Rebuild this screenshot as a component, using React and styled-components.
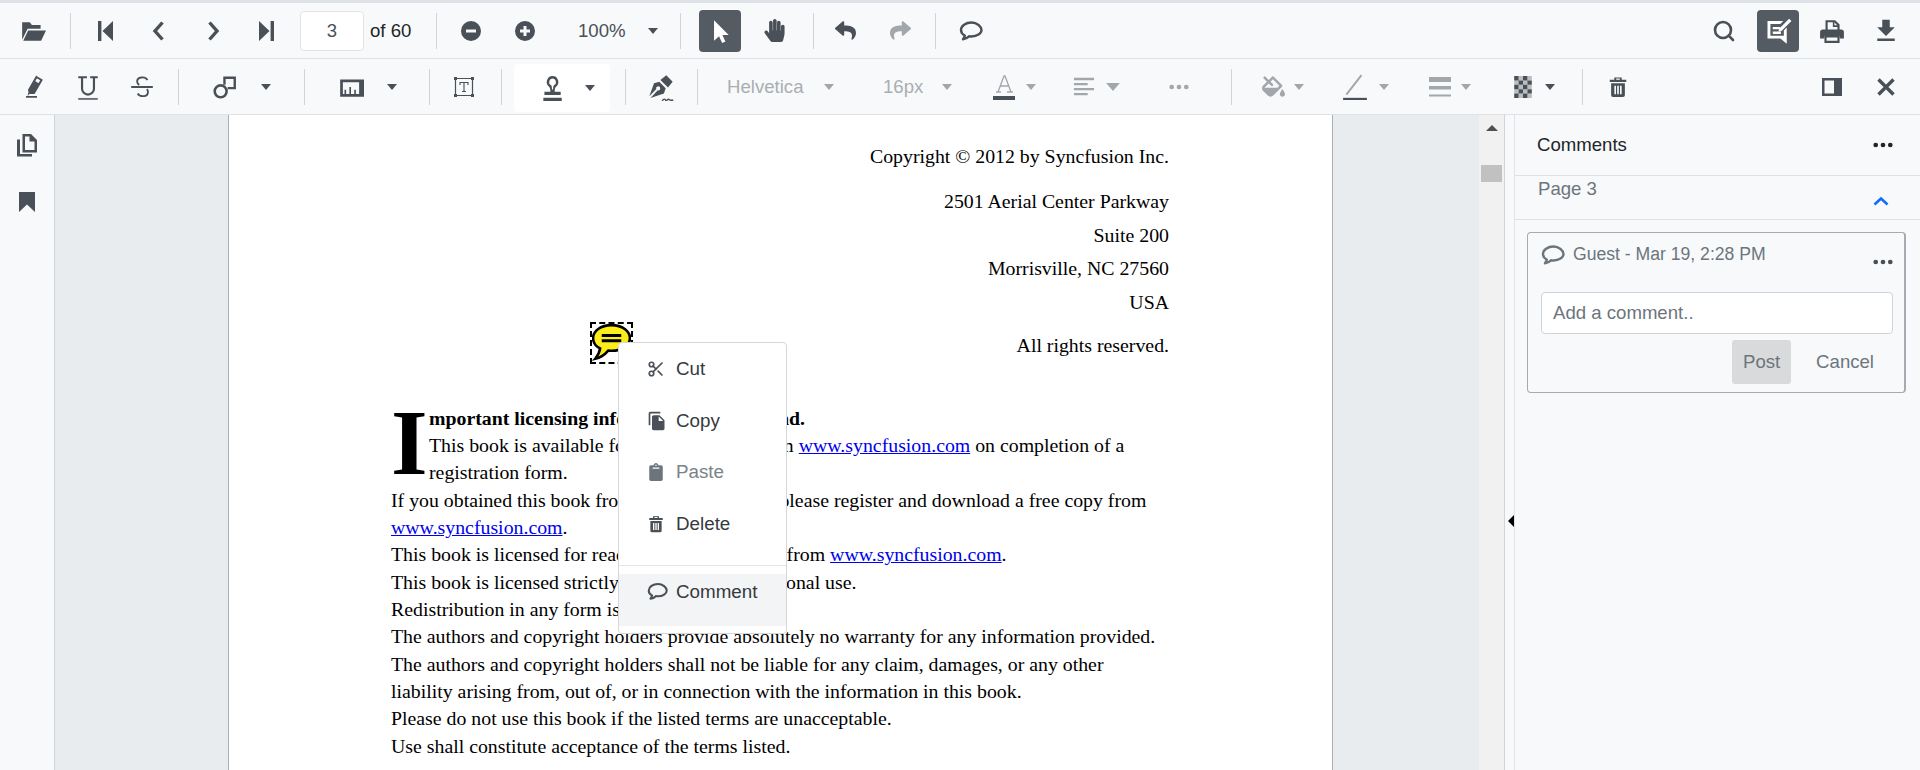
import React from 'react';
import styled, { createGlobalStyle } from 'styled-components';
import { FaHandPaper, FaReply, FaShare, FaFillDrip, FaClipboard } from 'react-icons/fa';
import { MdFileDownload, MdFileCopy } from 'react-icons/md';
import { Search, Scissors } from 'lucide-react';

const GlobalStyle = createGlobalStyle`
    html, body {
        margin: 0;
        height: 100%;
        overflow: hidden;
        background: #fff;
        font-family: "Liberation Sans", Arial, sans-serif;
    }
    #root { height: 100%; }
    * { box-sizing: border-box; }
`

const Viewer = styled.div`
    height: 770px;
    width: 1920px;
    display: flex;
    flex-direction: column;
    border-top: 3px solid #dee2e6;
    overflow: hidden;
`

const Bar = styled.div`
    height: 56px;
    flex-shrink: 0;
    display: flex;
    align-items: center;
    padding: 0 7px 0 ${p => p.$pl}px;
    background: #f8f9fa;
    border-bottom: 1px solid #dee2e6;
    color: #495057;
`

const Tool = styled.div`
    width: ${p => p.$w || 54}px;
    margin-left: ${p => p.$ml || 0}px;
    height: 42px;
    flex-shrink: 0;
    display: flex;
    align-items: center;
    justify-content: center;
    color: ${p => p.$off ? '#a2a7ac' : '#495057'};
`

const ActiveTool = styled(Tool)`
    width: 42px;
    background: #545b62;
    border-radius: 4px;
    color: #fff;
`

const Sep = styled.div`
    width: 1px;
    height: ${p => p.$h || 36}px;
    flex-shrink: 0;
    margin-left: ${p => p.$ml || 0}px;
    background: #ced4da;
`

const PageInput = styled.div`
    width: 64px;
    height: 40px;
    margin-left: 6px;
    flex-shrink: 0;
    background: #fff;
    border: 1px solid #e2e5e8;
    border-radius: 4px;
    display: flex;
    align-items: center;
    justify-content: center;
    font-size: 18.5px;
    color: #495057;
`

const BarText = styled.div`
    margin-left: ${p => p.$ml || 0}px;
    width: ${p => p.$w}px;
    flex-shrink: 0;
    white-space: nowrap;
    font-size: 18.6px;
    color: ${p => p.$color};
`

const Spacer = styled.div`
    flex: 1;
`

const StampBox = styled.div`
    width: 96px;
    height: 48px;
    margin-left: 12px;
    margin-top: 2px;
    flex-shrink: 0;
    display: flex;
    align-items: center;
    padding-left: 11px;
    background: #fff;
    border-radius: 4px;
`

const Main = styled.div`
    flex: 1;
    min-height: 0;
    display: flex;
`

const Rail = styled.div`
    width: 55px;
    flex-shrink: 0;
    background: #f8f9fa;
    border-right: 1px solid #ced4da;
    display: flex;
    flex-direction: column;
    align-items: center;
    padding-top: 18px;
    gap: 33px;
    color: #495057;
`

const Canvas = styled.div`
    width: 1424px;
    flex-shrink: 0;
    background: #e9ecef;
    padding-left: 173px;
    overflow: hidden;
`

const Page = styled.div`
    position: relative;
    width: 1105px;
    height: 100%;
    background: #fff;
    border-left: 1px solid #a9afb5;
    border-right: 1px solid #a9afb5;
    padding: 20px 163px 0 162px;
    font-family: "Liberation Serif", "Times New Roman", serif;
    font-size: 19.82px;
    color: #000;
`

const RightLine = styled.div`
    text-align: right;
    height: ${p => p.$h}px;
    line-height: ${p => p.$h}px;
    margin-top: ${p => p.$mt || 0}px;
`

const Body = styled.div`
    margin-top: 42px;
    line-height: 27.35px;
`

const DropCap = styled.span`
    float: left;
    font-size: 94px;
    font-weight: bold;
    line-height: 74px;
    height: 76px;
    width: 38px;
`

const Link = styled.a`
    color: #0000ee;
    text-decoration: underline;
`

const NoteMark = styled.div`
    position: absolute;
    left: 361px;
    top: 207px;
    width: 43px;
    height: 42px;
    border: 2px dashed #000;
    display: flex;
    align-items: center;
    justify-content: center;
`

const Menu = styled.div`
    position: absolute;
    left: 389px;
    top: 227px;
    width: 169px;
    height: 292px;
    background: #fff;
    border: 1px solid #d5d8db;
    border-radius: 4px;
    font-family: "Liberation Sans", Arial, sans-serif;
    font-size: 18.8px;
    color: #343a40;
`

const MenuItem = styled.div`
    height: ${p => p.$h || 51.7}px;
    display: flex;
    align-items: center;
    color: ${p => p.$off ? '#7a828a' : '#343a40'};
    background: ${p => p.$hot ? '#f3f4f5' : 'transparent'};
    padding-bottom: ${p => p.$hot ? 16 : 0}px;

    svg {
        color: ${p => p.$off ? '#6c757d' : '#495057'};
    }
`

const MenuIcon = styled.div`
    width: 57px;
    padding-left: 28px;
    flex-shrink: 0;
    display: flex;
    align-items: center;
`

const MenuLine = styled.div`
    height: 1px;
    background: #e2e4e6;
    margin-top: 15px;
    margin-bottom: 8px;
`

const Track = styled.div`
    width: 26px;
    flex-shrink: 0;
    background: #f1f1f1;
    border-right: 1px solid #ced4da;
    display: flex;
    flex-direction: column;
    align-items: center;
    padding-top: 10px;
`

const TrackArrow = styled.div`
    width: 0;
    height: 0;
    border-left: 6px solid transparent;
    border-right: 6px solid transparent;
    border-bottom: 6px solid #505050;
`

const Thumb = styled.div`
    width: 21px;
    height: 17px;
    margin-top: 34px;
    background: #c1c1c1;
`

const Splitter = styled.div`
    width: 10px;
    flex-shrink: 0;
    background: #f8f9fa;
    border-right: 1px solid #e1e4e7;
    position: relative;
`

const SplitArrow = styled.div`
    position: absolute;
    left: 3px;
    top: 400px;
    width: 0;
    height: 0;
    border-top: 6px solid transparent;
    border-bottom: 6px solid transparent;
    border-right: 6px solid #000;
`

const Panel = styled.div`
    flex: 1;
    min-width: 0;
    background: #f8f9fa;
    color: #343a40;
    font-size: 18.6px;
`

const PanelHead = styled.div`
    height: 61px;
    display: flex;
    align-items: center;
    justify-content: space-between;
    padding: 0 27px 0 22px;
    border-bottom: 1px solid #dee2e6;
    color: #212529;
`

const PageRow = styled.div`
    height: 44px;
    position: relative;
    padding: 2px 0 0 23px;
    border-bottom: 1px solid #dee2e6;
    color: #6c757d;
    line-height: 22px;
`

const Chevron = styled.div`
    position: absolute;
    right: 31px;
    top: 20px;
    color: #0d6efd;
    display: flex;
`

const Card = styled.div`
    width: 379px;
    height: 161px;
    margin: 12px 0 0 12px;
    border: 1px solid #a5abb1;
    border-right-width: 2px;
    border-radius: 4px;
    padding: 0 11px 0 13px;
    color: #6c757d;
`

const CardHead = styled.div`
    height: 59px;
    display: flex;
    align-items: flex-start;
    padding-top: 10px;
    line-height: 22px;

    svg { flex-shrink: 0; }
`

const CardTitle = styled.div`
    flex: 1;
    margin-left: 8px;
    font-size: 17.6px;
`

const CardDots = styled.div`
    display: flex;
    margin-top: 16px;
    color: #495057;
`

const CommentInput = styled.div`
    height: 42px;
    background: #fff;
    border: 1px solid #ced4da;
    border-radius: 4px;
    padding-left: 11px;
    display: flex;
    align-items: center;
    color: #6c757d;
`

const CardActions = styled.div`
    display: flex;
    justify-content: flex-end;
    align-items: center;
    margin-top: 6px;
    padding-right: 19px;
`

const PostButton = styled.div`
    width: 59px;
    height: 44px;
    background: #d9dadc;
    border-radius: 3px;
    display: flex;
    align-items: center;
    justify-content: center;
`

const CancelButton = styled.div`
    margin-left: 25px;
`

const Svg = ({ size = 24, w, h, children, vb = '0 0 24 24' }) => (
    <svg width={w || size} height={h || size} viewBox={vb} fill="currentColor" aria-hidden="true">
        {children}
    </svg>
);

const Stroke = { fill: 'none', stroke: 'currentColor', strokeWidth: 2.4 };

const Caret = ({ w = 10 }) => (
    <Svg w={w} h={w / 2 + 1} vb="0 0 12 7"><path d="M0 0h12L6 7z" /></Svg>
);

const Dots = () => (
    <Svg w={20} h={6} vb="0 0 22 6">
        <circle cx="3" cy="3" r="2.6" /><circle cx="11" cy="3" r="2.6" /><circle cx="19" cy="3" r="2.6" />
    </Svg>
);

const BubbleIcon = ({ size = 24, sw = 2.4 }) => (
    <Svg size={size}>
        <path d="M12.500 3.500C6.800 3.500 2 6.800 2 11c0 2.400 1.500 4.300 3.800 5.500-.2 1.400-.8 2.500-1.800 3.800 2.500-.4 4.500-1.500 6-3 .8.100 1.600.200 2.500.200 5.500 0 10-3 10-6.500s-4.500-7.500-10-7.500z" {...Stroke} strokeWidth={sw} strokeLinejoin="round" />
    </Svg>
);

const FolderIcon = () => (
    <Svg size={26}><path d="M2 4h7l2 2.500h8V10H7L2 20z" /><path d="M7.500 11.500H24L19.500 21H3z" /></Svg>
);
const FirstIcon = () => (
    <Svg size={24}><path d="M5 2h3.400v20H5zM20 2v20L9.500 12z" /></Svg>
);
const LastIcon = () => (
    <Svg size={24}><path d="M19 2h-3.400v20H19zM4 2v20l10.500-10z" /></Svg>
);
const ChevLeft = () => (
    <Svg size={24}><path d="M15.500 3.500 8 12l7.500 8.500" {...Stroke} strokeWidth={3.400} /></Svg>
);
const ChevRight = () => (
    <Svg size={24}><path d="M8.500 3.500 16 12l-7.500 8.500" {...Stroke} strokeWidth={3.400} /></Svg>
);
const MinusIcon = () => (
    <Svg size={24}><path fillRule="evenodd" d="M12 2a10 10 0 1 0 0 20 10 10 0 0 0 0-20zM7 10.500h10v3H7z" /></Svg>
);
const PlusIcon = () => (
    <Svg size={24}><path fillRule="evenodd" d="M12 2a10 10 0 1 0 0 20 10 10 0 0 0 0-20zM10.500 7h3v3.500H17v3h-3.500V17h-3v-3.500H7v-3h3.500z" /></Svg>
);
const CursorIcon = () => (
    <Svg size={26}><path d="M6.500 2v19l4.600-4.200 2.900 6.200 3-1.400-2.800-6h5.800z" /></Svg>
);
const NoteEditIcon = () => (
    <Svg size={28}>
        <path fillRule="evenodd" d="M3 3.500h13.500L14 6H5.500v10H17v-4.500l2.500-2.500V23l-5.500-4.500H3z" />
        <path d="M7.500 8.500h6.500v2H7.500zM7.500 12.500h7v2h-7z" />
        <path d="M21.500 1.500l2 2-8.500 8.500-2.600.6.600-2.600z" />
    </Svg>
);
const PrintIcon = () => (
    <Svg size={26}>
        <path d="M7 11V3h7.500L18 6.500V11" {...Stroke} strokeWidth={2} />
        <path d="M13.500 3v4.500H18" {...Stroke} strokeWidth={1.400} />
        <path fillRule="evenodd" d="M3.500 10.500h17A2.500 2.500 0 0 1 23 13v6h-4v-2.500H5V19H1v-6a2.500 2.500 0 0 1 2.500-2.500z" />
        <path d="M6 17h12v5H6z" {...Stroke} strokeWidth={2} />
    </Svg>
);
const HighlightIcon = () => (
    <Svg size={24}>
        <path d="M14.500 2l5 3-7.500 13H8.500L7 15z" fill="none" stroke="currentColor" strokeWidth="2" />
        <path d="M13 6l4.500 2.800-5.500 9.200H8.500L7 15z" />
        <path d="M4 21h11v1.800H4zM7 15l1.500 3-3 3z" />
    </Svg>
);
const UnderlineIcon = () => (
    <Svg size={26}>
        <path d="M3 3h8M14 3h7M6.500 3v10.500a5.500 5.500 0 0 0 11 0V3" {...Stroke} strokeWidth={2} />
        <path d="M3 23h18" {...Stroke} strokeWidth={1.800} opacity="0.8" />
    </Svg>
);
const StrikeIcon = () => (
    <Svg size={26}>
        <path d="M17 5.500C15 2 7.500 2.500 7.500 7c0 1.600 1 2.600 2 3.200M8 18c2 3.500 9.500 3.500 9.500-1.500 0-1-.4-1.800-1-2.500" {...Stroke} strokeWidth={1.700} />
        <path d="M2 12h20" {...Stroke} strokeWidth={1.800} />
    </Svg>
);
const ShapeIcon = () => (
    <Svg size={26}>
        <circle cx="8" cy="16" r="5.500" {...Stroke} strokeWidth={2.400} />
        <path d="M11.500 10V3.500H21V13h-6.500" {...Stroke} strokeWidth={2.200} />
    </Svg>
);
const MeasureIcon = () => (
    <Svg size={26}>
        <path fillRule="evenodd" d="M2 5h22v16H2zM4.500 7.500v11H6v-4h1.500v4h3v-6.500h1.500v6.500h3v-4h1.500v4h3V7.500z" />
    </Svg>
);
const FreeTextIcon = () => (
    <Svg size={24}>
        <path d="M3.500 3.500h17v17h-17z" fill="none" stroke="currentColor" strokeWidth="1.200" />
        <path d="M2 2h3v3H2zM19 2h3v3h-3zM2 19h3v3H2zM19 19h3v3h-3z" />
        <path d="M8 10V7.500h8V10M12 7.500v9M10 16.500h4" fill="none" stroke="currentColor" strokeWidth="1.100" />
    </Svg>
);
const StampIcon = () => (
    <Svg size={26}>
        <path fillRule="evenodd" d="M12.500 1a5.500 5.500 0 0 0-3 10c.7.700 1 2 1 4.500H5v3h15v-3h-5.500c0-2.500.3-3.800 1-4.500a5.500 5.500 0 0 0-3-10zm0 2.300a3.200 3.200 0 0 1 1.500 6c-.8.800-1 2.200-1 4h-1c0-1.800-.2-3.200-1-4a3.200 3.200 0 0 1 1.500-6z" />
        <path d="M4 21h17v3H4z" />
    </Svg>
);
const SignIcon = () => (
    <Svg size={28}>
        <path fillRule="evenodd" d="M10.500 7.500 16 13l-1.500 4.500L3 21.500l6.200-6.700a1.700 1.700 0 1 0-1.200-1.100L2 20 6 8.700z" />
        <path d="M11.500 6 16.500 2l5.500 5.500-4 5z" />
        <path d="M13 24c1.500-2 2.500-2 3-.6s1.700-1.400 2.700-.8 1.800 1.400 3.800.4" {...Stroke} strokeWidth={1.200} />
    </Svg>
);
const FontColorIcon = () => (
    <Svg w={24} h={28} vb="0 0 24 28">
        <path d="M4 19h5M15 19h6M6 19 12 3h1l6 16M8.300 13h8.500" {...Stroke} strokeWidth={1.300} />
        <path d="M1 23h22v4H1z" fill="#495057" />
    </Svg>
);
const AlignIcon = () => (
    <Svg w={22} h={22}>
        <path d="M1 2h22v2.600H1zM1 7.500h15v2.600H1zM1 13h22v2.600H1zM1 18.500h15v2.600H1z" />
    </Svg>
);
const LineColorIcon = () => (
    <Svg size={26}>
        <path d="M4 19 18 1" {...Stroke} strokeWidth={1.800} />
        <path d="M1 22h22v3.500H1z" fill="#495057" />
    </Svg>
);
const ThicknessIcon = () => (
    <Svg size={24}>
        <path d="M1 2h22v5H1zM1 11h22v3.500H1zM1 19.500h22v2H1z" />
    </Svg>
);
const OpacityIcon = () => (
    <Svg size={22} vb="0 0 20 25">
        <path d="M0 0h5v5H0zM10 0h5v5h-5zM5 5h5v5H5zM15 5h5v5h-5zM0 10h5v5H0zM10 10h5v5h-5zM5 15h5v5H5zM15 15h5v5h-5zM0 20h5v5H0zM10 20h5v5h-5z" />
        <path d="M5 0h5v5H5zM15 0h5v5h-5zM0 5h5v5H0zM10 5h5v5h-5zM5 10h5v5H5zM15 10h5v5h-5zM0 15h5v5H0zM10 15h5v5h-5zM5 20h5v5H5zM15 20h5v5h-5z" opacity="0.35" />
    </Svg>
);
const TrashIcon = ({ size = 22 }) => (
    <Svg size={size}>
        <path fillRule="evenodd" d="M3 4h5V1.500h8V4h5v2.500H3zM10 2.800V4h4V2.800zM4.500 8h15v13a2 2 0 0 1-2 2h-11a2 2 0 0 1-2-2zM8 10.500V20h1.800v-9.500zM11.100 10.500V20h1.800v-9.500zM14.200 10.500V20H16v-9.500z" />
    </Svg>
);
const PanelIcon = () => (
    <Svg size={24}>
        <path fillRule="evenodd" d="M2 3h20v18H2zM4.500 5.500v13H14v-13z" />
    </Svg>
);
const CloseIcon = () => (
    <Svg size={24}><path d="M4.500 4.500l15 15M19.500 4.500l-15 15" {...Stroke} strokeWidth={3.400} /></Svg>
);
const PagesIcon = () => (
    <Svg size={24}>
        <path fillRule="evenodd" d="M7.500 1H16l6 6v12.500H7.500zM10 3.500V17h9.500V8.500H14.500v-5z" />
        <path d="M2 6.500h3V21h12v2.500H2z" />
    </Svg>
);
const BookmarkIcon = () => (
    <Svg size={24}><path d="M4 2h16v20l-8-7.500L4 22z" /></Svg>
);
const ChevUp = () => (
    <Svg w={16} h={10} vb="0 0 16 10"><path d="M1.500 8.500 8 2.500l6.500 6" {...Stroke} strokeWidth={2.600} /></Svg>
);

const App = () => {
    return (
        <Viewer>
            <GlobalStyle />
            <Bar $pl={6}>
                <Tool><FolderIcon /></Tool>
                <Sep $ml={10} />
                <Tool $ml={7}><FirstIcon /></Tool>
                <Tool><ChevLeft /></Tool>
                <Tool><ChevRight /></Tool>
                <Tool><LastIcon /></Tool>
                <PageInput>3</PageInput>
                <BarText $ml={6} $w={41} $color="#212529">of 60</BarText>
                <Sep $ml={25} />
                <Tool $ml={7}><MinusIcon /></Tool>
                <Tool><PlusIcon /></Tool>
                <BarText $ml={26} $w={48} $color="#495057">100%</BarText>
                <Tool><Caret /></Tool>
                <Sep />
                <ActiveTool $ml={18}><CursorIcon /></ActiveTool>
                <Tool $w={66}><FaHandPaper size={23} /></Tool>
                <Sep $ml={6} />
                <Tool $ml={4}><FaReply size={21} /></Tool>
                <Tool $ml={1} $off><FaShare size={21} /></Tool>
                <Sep $ml={8} />
                <Tool $ml={8}><BubbleIcon /></Tool>
                <Spacer />
                <Tool><Search size={24} strokeWidth={2.600} /></Tool>
                <ActiveTool $ml={6}><NoteEditIcon /></ActiveTool>
                <Tool $ml={6}><PrintIcon /></Tool>
                <Tool><MdFileDownload size={30} /></Tool>
            </Bar>
            <Bar $pl={7}>
                <Tool><HighlightIcon /></Tool>
                <Tool><UnderlineIcon /></Tool>
                <Tool><StrikeIcon /></Tool>
                <Sep $ml={9} />
                <Tool $ml={19}><ShapeIcon /></Tool>
                <Tool $w={28}><Caret /></Tool>
                <Sep $ml={24} />
                <Tool $ml={19}><MeasureIcon /></Tool>
                <Tool $w={28}><Caret /></Tool>
                <Sep $ml={23} />
                <Tool $ml={7}><FreeTextIcon /></Tool>
                <Sep $ml={10} />
                <StampBox>
                    <Tool $w={54}><StampIcon /></Tool>
                    <Tool $w={22}><Caret /></Tool>
                </StampBox>
                <Sep $ml={15} />
                <Tool $ml={8}><SignIcon /></Tool>
                <Sep $ml={9} />
                <BarText $ml={29} $w={78} $color="#a9aeb3">Helvetica</BarText>
                <Tool $w={48} $off><Caret /></Tool>
                <BarText $ml={30} $w={39} $color="#a9aeb3">16px</BarText>
                <Tool $w={50} $off><Caret /></Tool>
                <Tool $w={44} $ml={10} $off><FontColorIcon /></Tool>
                <Tool $w={10} $off><Caret /></Tool>
                <Tool $w={40} $ml={28} $off><AlignIcon /></Tool>
                <Tool $w={18} $off><Caret w={14} /></Tool>
                <Tool $w={40} $ml={37} $off><Dots /></Tool>
                <Sep $ml={32} />
                <Tool $w={40} $ml={21} $off><FaFillDrip size={23} /></Tool>
                <Tool $w={12} $off><Caret /></Tool>
                <Tool $w={40} $ml={30} $off><LineColorIcon /></Tool>
                <Tool $w={18} $off><Caret /></Tool>
                <Tool $w={40} $ml={27} $off><ThicknessIcon /></Tool>
                <Tool $w={12} $off><Caret /></Tool>
                <Tool $w={40} $ml={31}><OpacityIcon /></Tool>
                <Tool $w={14}><Caret /></Tool>
                <Sep $ml={25} />
                <Tool $ml={8}><TrashIcon /></Tool>
                <Spacer />
                <Tool><PanelIcon /></Tool>
                <Tool><CloseIcon /></Tool>
            </Bar>
            <Main>
                <Rail>
                    <PagesIcon />
                    <BookmarkIcon />
                </Rail>
                <Canvas>
                    <Page>
                        <RightLine $h={43}>Copyright © 2012 by Syncfusion Inc.</RightLine>
                        <RightLine $h={33.500} $mt={7}>2501 Aerial Center Parkway</RightLine>
                        <RightLine $h={33.500}>Suite 200</RightLine>
                        <RightLine $h={33.500}>Morrisville, NC 27560</RightLine>
                        <RightLine $h={33.500}>USA</RightLine>
                        <RightLine $h={33.500} $mt={10}>All rights reserved.</RightLine>
                        <Body>
                            <DropCap>I</DropCap>
                            <b>mportant licensing information. Please read.</b><br />
                            This book is available for free download from <Link>www.syncfusion.com</Link> on completion of a registration form.<br />
                            If you obtained this book from any other source, please register and download a free copy from <Link>www.syncfusion.com</Link>.<br />
                            This book is licensed for reading only if obtained from <Link>www.syncfusion.com</Link>.<br />
                            This book is licensed strictly for personal, educational use.<br />
                            Redistribution in any form is prohibited.<br />
                            The authors and copyright holders provide absolutely no warranty for any information provided.<br />
                            The authors and copyright holders shall not be liable for any claim, damages, or any other liability arising from, out of, or in connection with the information in this book.<br />
                            Please do not use this book if the listed terms are unacceptable.<br />
                            Use shall constitute acceptance of the terms listed.
                        </Body>
                        <NoteMark>
                            <svg width="40" height="40" viewBox="1 2 36 35" aria-hidden="true">
                                <path d="M19 3C9 3 2 8.500 2 15c0 4 2.500 7.500 6.500 9.500C8 28 6.500 31 4 34c5-1 9-4 12-7.500 1 .1 2 .2 3 .2 10 0 17-5.200 17-11.700S29 3 19 3z" fill="#fcec1c" stroke="#000" strokeWidth="2.400" />
                                <path d="M10 12.500h18M10 17.500h18" stroke="#000" strokeWidth="2.800" />
                            </svg>
                        </NoteMark>
                        <Menu>
                            <MenuItem><MenuIcon><Scissors size={18} strokeWidth={2.200} /></MenuIcon>Cut</MenuItem>
                            <MenuItem><MenuIcon><MdFileCopy size={20} /></MenuIcon>Copy</MenuItem>
                            <MenuItem $off><MenuIcon><FaClipboard size={18} /></MenuIcon>Paste</MenuItem>
                            <MenuItem><MenuIcon><TrashIcon size={18} /></MenuIcon>Delete</MenuItem>
                            <MenuLine />
                            <MenuItem $hot $h={52}><MenuIcon><BubbleIcon size={21} /></MenuIcon>Comment</MenuItem>
                        </Menu>
                    </Page>
                </Canvas>
                <Track>
                    <TrackArrow />
                    <Thumb />
                </Track>
                <Splitter><SplitArrow /></Splitter>
                <Panel>
                    <PanelHead>Comments<Dots /></PanelHead>
                    <PageRow>Page 3<Chevron><ChevUp /></Chevron></PageRow>
                    <Card>
                        <CardHead>
                            <BubbleIcon size={24} />
                            <CardTitle>Guest - Mar 19, 2:28 PM</CardTitle>
                            <CardDots><Dots /></CardDots>
                        </CardHead>
                        <CommentInput>Add a comment..</CommentInput>
                        <CardActions>
                            <PostButton>Post</PostButton>
                            <CancelButton>Cancel</CancelButton>
                        </CardActions>
                    </Card>
                </Panel>
            </Main>
        </Viewer>
    );
};

export default App;
